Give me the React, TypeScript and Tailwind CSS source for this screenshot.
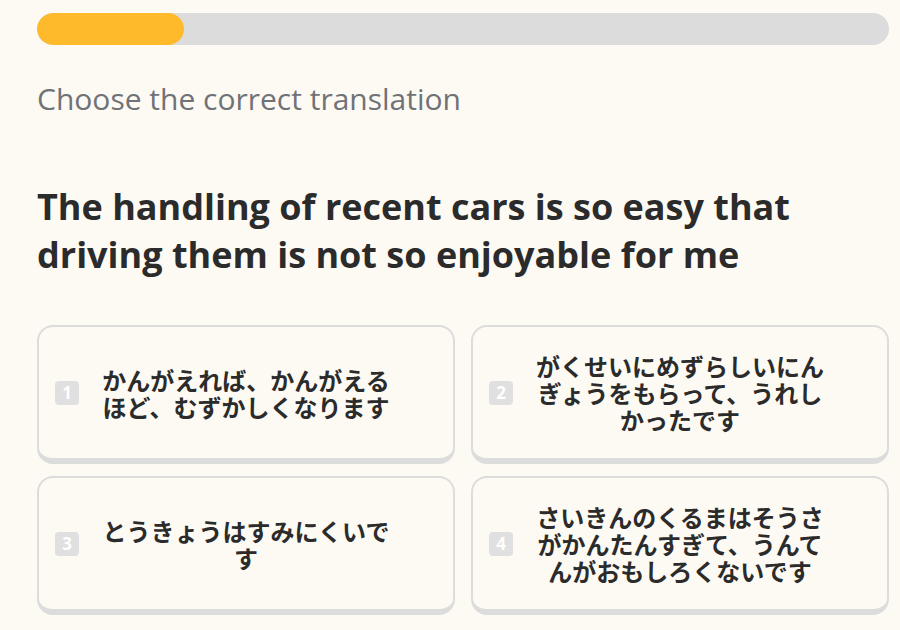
import React from "react";

const options = [
  { n: 1, text: "かんがえれば、かんがえるほど、むずかしくなります" },
  { n: 2, text: "がくせいにめずらしいにんぎょうをもらって、うれしかったです" },
  { n: 3, text: "とうきょうはすみにくいです" },
  { n: 4, text: "さいきんのくるまはそうさがかんたんすぎて、うんてんがおもしろくないです" },
];

export default function App() {
  return (
    <div
      className="w-[900px] h-[630px] overflow-hidden bg-[#fdfaf3]"
      style={{ fontFamily: '"Open Sans", "Noto Sans CJK JP", sans-serif' }}
    >
      <div className="ml-[37px] w-[852px] pt-[13px]">
        <div className="h-[32px] w-full rounded-full bg-[#dcdcdc] overflow-hidden">
          <div className="h-full w-[147px] rounded-full bg-[#ffba2b]" />
        </div>
        <div className="mt-[36px] text-[30px] leading-[36px] text-[#6f7277]">
          Choose the correct translation
        </div>
        <h1 className="mt-[66px] text-[36px] leading-[48px] font-bold text-[#2b2b2b] pr-[60px]">
          The handling of recent cars is so easy that driving them is not so enjoyable for me
        </h1>
        <div className="mt-[46px] grid grid-cols-2 gap-x-[16px] gap-y-[12px]">
          {options.map((o) => (
            <div
              key={o.n}
              className="h-[139px] rounded-[16px] border-2 border-b-[6px] border-[#dcdcdc] bg-[#fdfaf3] flex items-center px-[16px]"
            >
              <div
                className="w-[24px] h-[24px] shrink-0 rounded-[4px] bg-[#e0e0e0] text-white text-[17px] leading-none font-bold flex items-center justify-center"
                style={{ fontFamily: '"Open Sans", sans-serif' }}
              >
                {o.n}
              </div>
              <div className="flex-1 flex justify-center pr-[24px]">
                <div
                  className="max-w-[300px] text-center text-[24px] leading-[27px] font-bold text-[#2b2b2b]"
                  style={{ fontFamily: '"Noto Sans CJK JP", sans-serif' }}
                >
                  {o.text}
                </div>
              </div>
            </div>
          ))}
        </div>
      </div>
    </div>
  );
}
